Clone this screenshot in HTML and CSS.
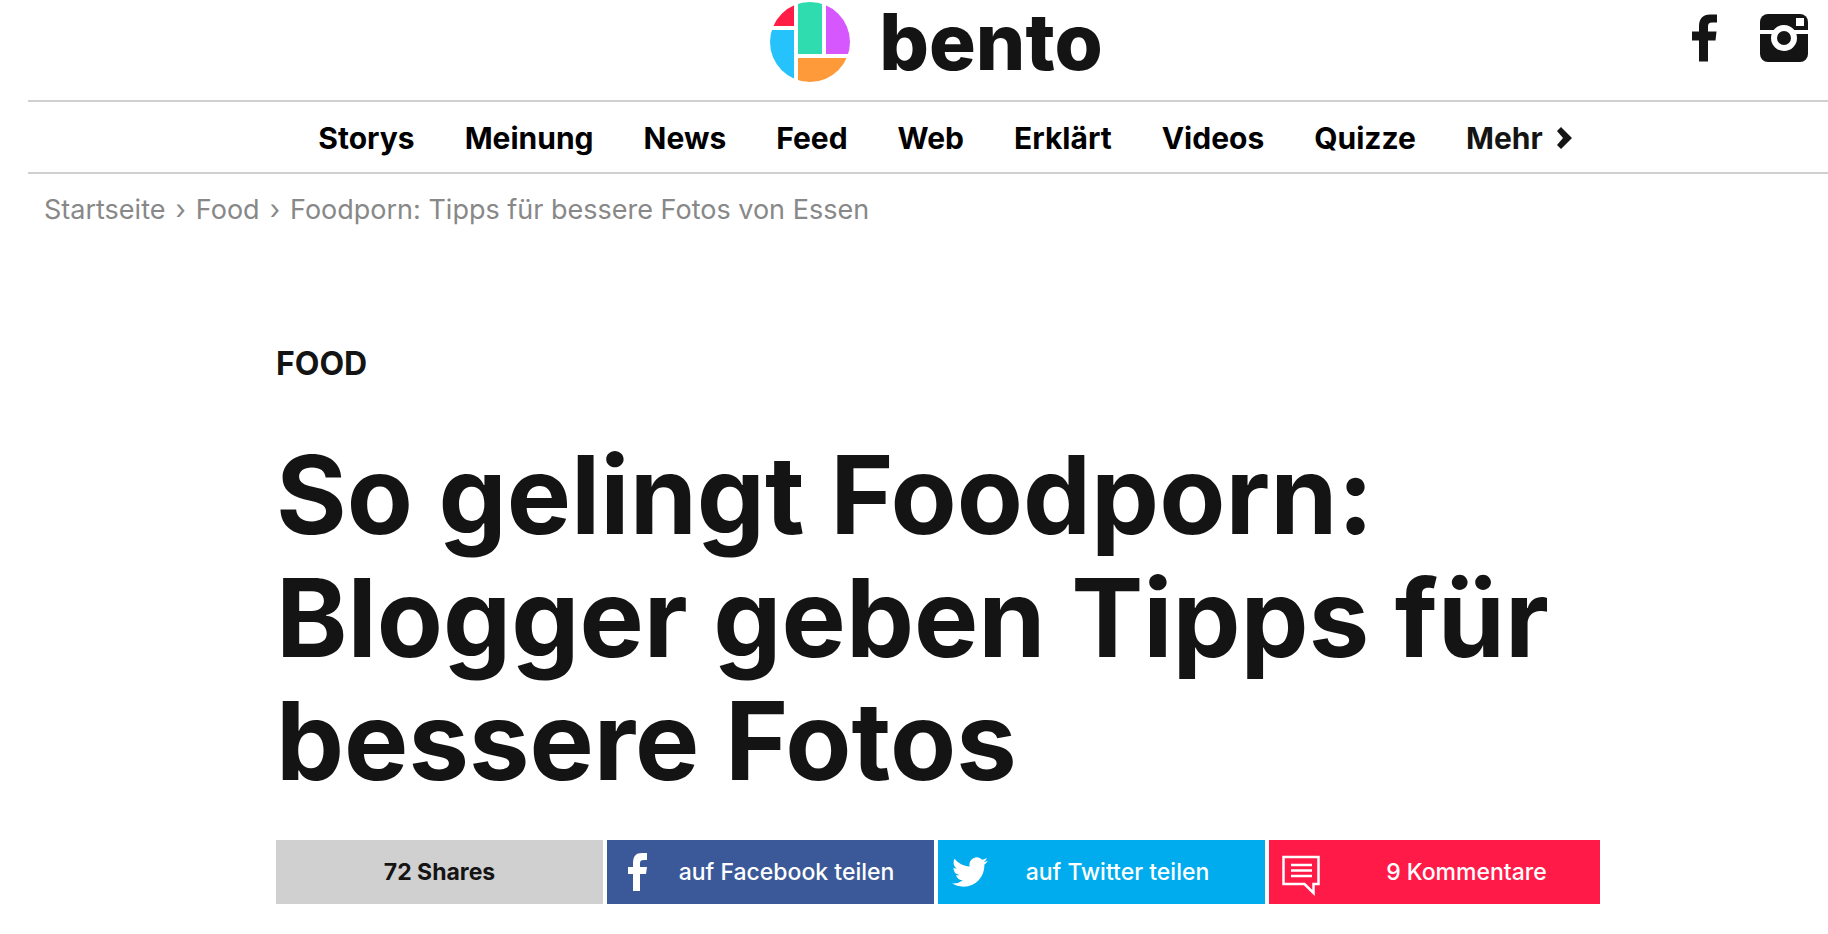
FILE: index.html
```html
<!DOCTYPE html>
<html lang="de">

<head>
    <meta charset="utf-8">
    <title>So gelingt Foodporn: Blogger geben Tipps für bessere Fotos</title>
    <link rel="stylesheet" href="styles.css">
</head>

<body>
    <header class="header">
        <a class="logo" href="#">
            <svg class="logo-mark" viewBox="0 0 82 82" aria-hidden="true">
                <clipPath id="circle">
                    <circle cx="41" cy="41" r="40" />
                </clipPath>
                <g clip-path="url(#circle)">
                    <rect x="0" y="0" width="25" height="25" fill="#ff1c47" />
                    <rect x="0" y="29" width="25" height="53" fill="#25c2fb" />
                    <rect x="29" y="0" width="24" height="53" fill="#2fdcb0" />
                    <rect x="57" y="0" width="25" height="53" fill="#d757ff" />
                    <rect x="29" y="57" width="53" height="25" fill="#ff9a3a" />
                </g>
            </svg>
            <span>bento</span>
        </a>
        <div class="social">
            <a href="#" aria-label="Facebook">
                <svg class="icon-facebook" viewBox="0 0 25 47">
                    <path fill="currentColor" d="M7 47V26H0V17H7V12C7 4 11 0 18 0H25V8H20C17 8 16 9.500 16 12V17H24.500L23.500 26H16V47Z" />
                </svg>
            </a>
            <a href="#" aria-label="Instagram">
                <svg class="icon-instagram" viewBox="0 0 48 48">
                    <rect width="48" height="48" rx="8" fill="currentColor" />
                    <rect x="36" y="4" width="8" height="8" fill="#fff" />
                    <rect y="16" width="48" height="4" fill="#fff" />
                    <circle cx="24" cy="24" r="10" fill="currentColor" stroke="#fff" stroke-width="6" />
                </svg>
            </a>
        </div>
    </header>

    <nav class="nav">
        <a href="#">Storys</a>
        <a href="#">Meinung</a>
        <a href="#">News</a>
        <a href="#">Feed</a>
        <a href="#">Web</a>
        <a href="#">Erklärt</a>
        <a href="#">Videos</a>
        <a href="#">Quizze</a>
        <button class="more" type="button">
            Mehr
            <svg class="icon-chevron" viewBox="0 0 15 22" aria-hidden="true">
                <path fill="currentColor" d="M0 4L4 0L15 11L4 22L0 18L6 11Z" />
            </svg>
        </button>
    </nav>

    <div class="breadcrumb">
        <a href="#">Startseite</a>
        <span>›</span>
        <a href="#">Food</a>
        <span>›</span>
        <span>Foodporn: Tipps für bessere Fotos von Essen</span>
    </div>

    <main class="article">
        <p class="category">FOOD</p>
        <h1>So gelingt Foodporn: Blogger geben Tipps für bessere Fotos</h1>

        <div class="share">
            <span class="share-item count">72 Shares</span>
            <a class="share-item facebook" href="#">
                <svg class="share-icon" viewBox="0 0 40 40" aria-hidden="true">
                    <path fill="currentColor" d="M14 39V22H9V15H14V11C14 4 17 1 23 1H28V8H25C22 8 21 9 21 11V15H28L27 22H21V39Z" />
                </svg>
                auf Facebook teilen
            </a>
            <a class="share-item twitter" href="#">
                <svg class="share-icon" viewBox="0 0 40 40" aria-hidden="true">
                    <path fill="currentColor" transform="translate(2 2) scale(1.500)" d="M23.950 4.570a10 10 0 0 1-2.820.770 4.960 4.960 0 0 0 2.160-2.720c-.950.550-2 .960-3.130 1.180a4.920 4.920 0 0 0-8.380 4.480C7.690 8.100 4.070 6.130 1.640 3.160a4.920 4.920 0 0 0 1.520 6.570 4.900 4.900 0 0 1-2.230-.610v.060a4.920 4.920 0 0 0 3.950 4.830 5 5 0 0 1-2.210.080 4.940 4.940 0 0 0 4.600 3.420A9.870 9.870 0 0 1 0 19.540a13.990 13.990 0 0 0 7.550 2.210c9.050 0 14-7.500 14-13.980 0-.210 0-.420-.020-.630a9.940 9.940 0 0 0 2.420-2.570z" />
                </svg>
                auf Twitter teilen
            </a>
            <a class="share-item comments" href="#">
                <svg class="share-icon" viewBox="0 0 40 40" aria-hidden="true">
                    <g fill="none" stroke="currentColor" stroke-width="2.500">
                        <path d="M2.500 5H37.500V32H32.500V41L23.500 32H2.500Z" />
                        <path d="M10 13H31M10 18.500H31M10 24H31" />
                    </g>
                </svg>
                9 Kommentare
            </a>
        </div>
    </main>
</body>

</html>
```
FILE: styles.css
```css
body {
    margin: 0;
    background: #fff;
    color: #141414;
    font-family: Inter, "Liberation Sans", sans-serif;
}

a {
    color: inherit;
    text-decoration: none;
}

svg {
    display: block;
    overflow: visible;
}

.header {
    display: grid;
    grid-template-columns: 1fr auto 1fr;
    height: 100px;
    margin-left: 28px;
    padding: 0 20px 0 36px;
    border-bottom: 2px solid #d0d0d0;
}

.logo {
    display: flex;
    grid-column: 2;
    gap: 28px;
    padding-top: 1px;
    font-size: 78px;
    font-weight: 800;
    line-height: 82px;
}

.logo-mark {
    width: 82px;
    height: 82px;
}

.social {
    display: flex;
    justify-content: flex-end;
    gap: 43px;
    padding-top: 14px;
}

.icon-facebook {
    width: 25px;
    height: 48px;
}

.icon-instagram {
    width: 48px;
    height: 48px;
}

.nav {
    display: flex;
    justify-content: center;
    align-items: center;
    gap: 50px;
    height: 68px;
    margin-left: 28px;
    padding: 2px 0 0 34px;
    border-bottom: 2px solid #d0d0d0;
    color: #000;
    font-size: 30px;
    font-weight: 700;
}

.more {
    display: flex;
    align-items: center;
    gap: 14px;
    padding: 0;
    border: none;
    background: none;
    color: #141414;
    font: inherit;
    cursor: pointer;
}

.icon-chevron {
    width: 15px;
    height: 22px;
}

.breadcrumb {
    display: flex;
    gap: 10px;
    padding: 18px 44px;
    color: #888;
    font-size: 27px;
    line-height: 36px;
}

.article {
    max-width: 1324px;
    margin: 0 auto;
    padding: 98px 0 28px 48px;
}

.category {
    margin: 0;
    font-size: 32px;
    font-weight: 700;
    line-height: 40px;
}

h1 {
    margin: 49px 0 38px;
    font-size: 108px;
    font-weight: 700;
    line-height: 123px;
}

.share {
    display: grid;
    grid-template-columns: 327fr 327fr 327fr 331fr;
    gap: 4px;
    font-size: 23px;
    font-weight: 500;
}

.share-item {
    display: flex;
    position: relative;
    justify-content: center;
    align-items: center;
    height: 64px;
    box-sizing: border-box;
}

/* icons lie over the left edge of the button */
.share-icon {
    position: absolute;
    left: 12px;
    width: 40px;
    height: 40px;
}

.count {
    background: #d0d0d0;
    font-weight: 700;
}

.facebook {
    padding-left: 32px;
    background: #3b5998;
    color: #fff;
}

.twitter {
    padding-left: 32px;
    background: #00acee;
    color: #fff;
}

.comments {
    padding-left: 64px;
    background: #ff1a48;
    color: #fff;
}
```
